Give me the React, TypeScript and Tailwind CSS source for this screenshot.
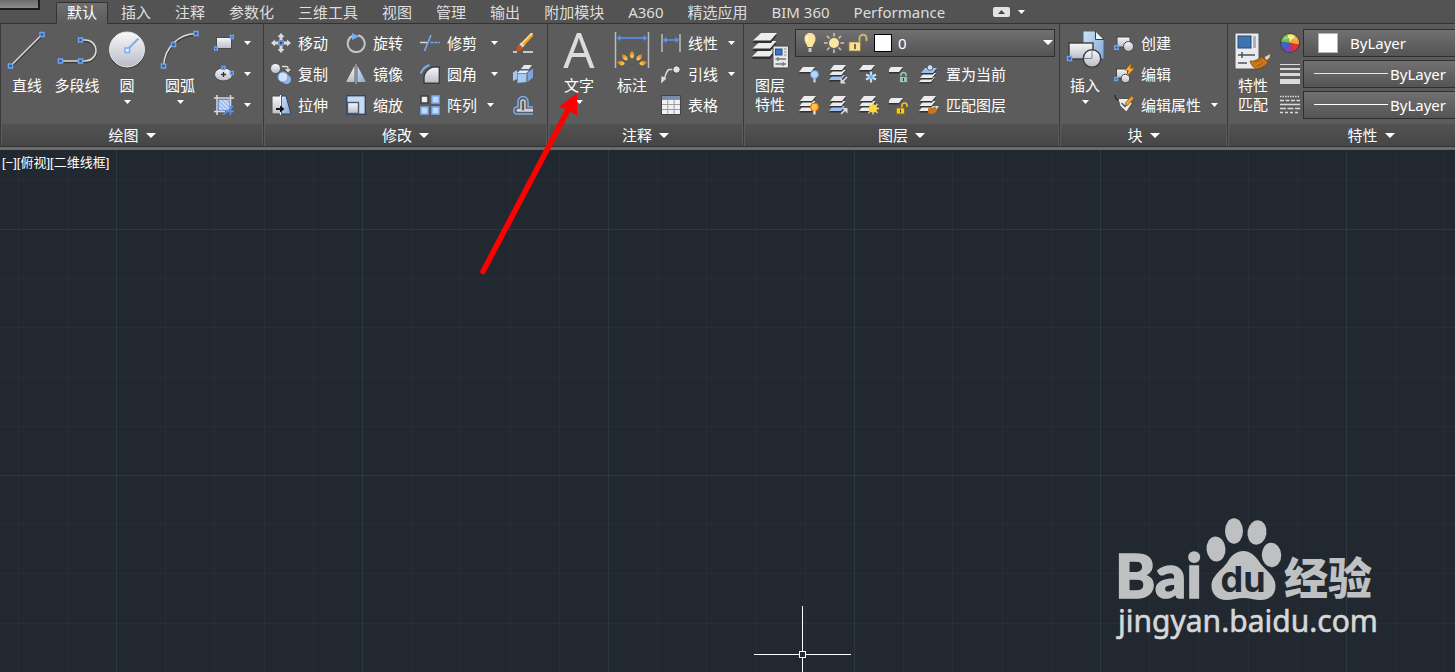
import type { ReactNode } from 'react'
import clsx from 'clsx'

const BLUE = '#7aacf5'
const LIGHT = '#d9dadc'

/* ---------- icon helpers ---------- */

function Small({ children }: { children: ReactNode }) {
  return (
    <svg width="20" height="20" viewBox="0 0 20 20" fill="none" className="shrink-0" aria-hidden="true">
      {children}
    </svg>
  )
}

function Large({ children }: { children: ReactNode }) {
  return (
    <svg width="38" height="38" viewBox="0 0 38 38" fill="none" className="shrink-0 overflow-visible" aria-hidden="true">
      {children}
    </svg>
  )
}

function Grip({ x, y, s = 4 }: { x: number; y: number; s?: number }) {
  return <rect x={x - s / 2} y={y - s / 2} width={s} height={s} fill="#39547e" stroke="#6fa3f0" strokeWidth="1.5" />
}

function Caret({ big = false }: { big?: boolean }) {
  return big ? (
    <svg width="10" height="5" viewBox="0 0 10 5" className="shrink-0" aria-hidden="true">
      <path d="M0 0h10L5 5z" fill="#fff" />
    </svg>
  ) : (
    <svg width="7" height="4" viewBox="0 0 7 4" className="shrink-0" aria-hidden="true">
      <path d="M0 0h7L3.5 4z" fill="#fff" />
    </svg>
  )
}

function Gradients() {
  return (
    <svg width="0" height="0" className="absolute" aria-hidden="true">
      <defs>
        <linearGradient id="silver" x1="0" y1="0" x2="0" y2="1">
          <stop offset="0" stopColor="#f8f8fa" />
          <stop offset="1" stopColor="#b9bcc8" />
        </linearGradient>
        <linearGradient id="ice" x1="0" y1="0" x2="1" y2="1">
          <stop offset="0" stopColor="#d3e4f6" />
          <stop offset="1" stopColor="#7fa6d6" />
        </linearGradient>
        <linearGradient id="flame" x1="0" y1="0" x2="0" y2="1">
          <stop offset="0" stopColor="#d8701a" />
          <stop offset="1" stopColor="#ffe04a" />
        </linearGradient>
        <pattern id="hatch" width="3" height="3" patternUnits="userSpaceOnUse" patternTransform="rotate(-45)">
          <rect width="3" height="3" fill="#8fb5ef" />
          <rect width="1.4" height="3" fill="#dbe8fc" />
        </pattern>
      </defs>
    </svg>
  )
}

/* ---------- draw ---------- */

const LineIcon = () => (
  <Large>
    <path d="M2.5 36 34 4.500" stroke="#3a3a3a" strokeWidth="2.500" />
    <path d="M2.5 35 34 3.500" stroke={LIGHT} strokeWidth="1.600" />
    <Grip x={2.5} y={35} />
    <Grip x={34} y={3.5} />
  </Large>
)

const PolylineIcon = () => (
  <Large>
    <path d="M2 31h25.500a10.500 10.500 0 0 0 0-21h-5" stroke="#3a3a3a" strokeWidth="2.500" />
    <path d="M2 30h25.500a10.500 10.500 0 0 0 0-21h-5" stroke={LIGHT} strokeWidth="1.600" />
    <Grip x={2.5} y={30} />
    <Grip x={22.5} y={30} />
    <Grip x={22.5} y={9} />
  </Large>
)

const CircleIcon = () => (
  <Large>
    <circle cx="19" cy="19.500" r="18" fill="#3b3b3b" />
    <circle cx="19" cy="18.500" r="17.500" fill="url(#silver)" stroke="#e6e7ea" />
    <path d="M19 19 30.500 7.500" stroke={BLUE} strokeWidth="2" />
    <rect x="17" y="17" width="4.500" height="4.500" fill="#e8effa" stroke={BLUE} strokeWidth="1.500" />
  </Large>
)

const ArcIcon = () => (
  <Large>
    <path d="M2.500 36C3.500 17 18 4 35 3.500" stroke="#3a3a3a" strokeWidth="2.500" />
    <path d="M2.500 35C3.500 16 18 3 35 2.500" stroke={LIGHT} strokeWidth="1.600" />
    <Grip x={2.5} y={35} />
    <Grip x={12.5} y={13.5} />
    <Grip x={35} y={2.5} />
  </Large>
)

const RectIcon = () => (
  <Small>
    <rect x="2.500" y="4.500" width="15" height="11" fill="url(#silver)" stroke="#4a4a4a" />
    <Grip x={1.8} y={15.5} s={3} />
    <Grip x={18} y={4} s={3} />
  </Small>
)

const EllipseIcon = () => (
  <Small>
    <ellipse cx="9.500" cy="10.500" rx="9" ry="6.500" fill="url(#silver)" stroke="#4a4a4a" />
    <path d="M9.500 8v5M7 10.500h5" stroke="#333" strokeWidth="1.300" />
    <Grip x={9.5} y={4} s={3} />
    <Grip x={17.8} y={9} s={3} />
  </Small>
)

const HatchIcon = () => (
  <Small>
    <rect x="4" y="4" width="12" height="12" fill="url(#hatch)" stroke="#2f4a7d" />
    <path d="M3 0v20M16.500 0v14M0 3h20M0 16.500h11" stroke={LIGHT} strokeWidth="1.500" />
    <path d="M16.500 11v9M12 16.500h8M9 20l10-9" stroke="#5b93ee" strokeWidth="1.500" />
  </Small>
)

/* ---------- modify ---------- */

const MoveIcon = () => (
  <Small>
    <path
      d="M10 0l3.500 4h-2v3h-3V4h-2zM10 20l3.500-4h-2v-3h-3v3h-2zM0 10l4-3.500v2h3v3H4v2zM20 10l-4-3.500v2h-3v3h3v2z"
      fill={LIGHT}
    />
    <rect x="8" y="8" width="4" height="4" fill="#2f4a7d" stroke={BLUE} strokeWidth="1.300" />
  </Small>
)

const CopyIcon = () => (
  <Small>
    <circle cx="15.500" cy="15.500" r="4.500" fill="#8fb4ea" />
    <circle cx="4.500" cy="4.500" r="4.500" fill="url(#silver)" />
    <circle cx="12" cy="13" r="5" fill="#cfe0f7" stroke="#6f9fe4" />
    <path d="M11 2.500h4.500a1.500 1.500 0 0 1 1.500 1.500v1" stroke={LIGHT} strokeWidth="1.300" />
    <path d="M14 5h6l-3 3.500z" fill={LIGHT} />
  </Small>
)

const StretchIcon = () => (
  <Small>
    <path d="M10 1h5l5 18H10z" fill="url(#ice)" stroke="#31435f" />
    <rect x="1" y="1" width="9.500" height="18" fill="url(#silver)" stroke="#4b4b4b" />
    <path d="M9.500 0v20" stroke="#fff" strokeWidth="1.200" />
    <path d="M5 14h5" stroke="#111" strokeWidth="2" />
    <path d="M9 10.500 13.500 14 9 17.500z" fill="#111" />
  </Small>
)

const RotateIcon = () => (
  <Small>
    <path d="M12 2.300a8.500 8.500 0 1 1-6 .900" stroke="#c4c5c8" strokeWidth="2" />
    <path d="M6 0l7 3.500L6 7z" fill={BLUE} />
  </Small>
)

const MirrorIcon = () => (
  <Small>
    <path d="M8.500 2v16H0z" fill="url(#silver)" />
    <path d="M11.500 2v16H20z" fill="url(#ice)" />
    <path d="M10 0v20" stroke="#aeb0b5" strokeWidth="1.200" />
  </Small>
)

const ScaleIcon = () => (
  <Small>
    <rect x=".700" y=".700" width="18.600" height="18.600" fill="#c3daf3" stroke="#31435f" strokeWidth="1.400" />
    <rect x="1.500" y="7.500" width="11" height="11" fill="url(#silver)" stroke="#51596a" strokeWidth="1.400" />
  </Small>
)

const TrimIcon = () => (
  <Small>
    <path d="M0 9.500h7" stroke={LIGHT} strokeWidth="1.500" />
    <path d="M4.500 18 11 2" stroke={BLUE} strokeWidth="1.600" />
    <path d="M10.500 9.500H20" stroke={BLUE} strokeWidth="1.500" strokeDasharray="3 1" />
  </Small>
)

const FilletIcon = () => (
  <Small>
    <path d="M4 19.300V13C4 8.500 8.500 4 13 3h6.300v16.300z" fill="url(#silver)" stroke="#3c3c3c" strokeWidth="1.400" />
    <path d="M.500 9.500C2.500 5 5 2.500 9.500 1" stroke={BLUE} strokeWidth="2" />
  </Small>
)

const ArrayIcon = () => (
  <Small>
    <rect x="1" y="1" width="7" height="7" fill="#eee" stroke="#3f3f3f" strokeWidth="1.500" />
    <rect x="12" y="1" width="7" height="7" fill="#c3d9f8" stroke={BLUE} strokeWidth="1.500" />
    <rect x="1" y="12" width="7" height="7" fill="#c3d9f8" stroke={BLUE} strokeWidth="1.500" />
    <rect x="12" y="12" width="7" height="7" fill="#c3d9f8" stroke={BLUE} strokeWidth="1.500" />
  </Small>
)

const EraseIcon = () => (
  <Small>
    <path d="M0 19h4M10 19h10" stroke="#eee" strokeWidth="1.300" />
    <path d="M18 0h2v3l-9 10-3-3z" fill="#e8a52c" />
    <path d="M19 0 9 10.500" stroke="#ffe69a" strokeWidth="1.300" />
    <path d="m8 9.500 3.500 3.200-2 1.800-3.300-3z" fill="#ddd" />
    <path d="m6.500 11.500 3.200 3C9 17.500 6 18.500 3 18c1-1.500.500-5.500 3.500-6.500z" fill="#cf5413" />
  </Small>
)

const ExplodeIcon = () => (
  <Small>
    <path d="m8 5 3-4h8l-3 4z" fill="#dbe9f9" />
    <path d="M0 8.500 4 6v9l-4 2z" fill="#a3c6ee" />
    <path d="m4 9 3-2.500h9L13.500 9z" fill="#e4eefa" />
    <path d="M4.500 9.500h9V18L4.500 19z" fill="#a9c9f0" stroke="#6c8db8" strokeWidth=".600" />
    <path d="m14.500 9 5.500-4.500v9L14.500 18z" fill="#7ba7de" />
  </Small>
)

const OffsetIcon = () => (
  <Small>
    <path d="M20 19H3.500A2.500 2.500 0 0 1 1 16.500v-2A2.500 2.500 0 0 1 3.500 12H5V6.500a5 5 0 0 1 10 0V12h5" stroke={BLUE} strokeWidth="1.500" />
    <path d="M20 16H5c-1 0-1-1.500 0-1.500h3V7a2 2 0 0 1 4 0v7.500h8" stroke="#d2d3d6" strokeWidth="1.500" />
  </Small>
)

/* ---------- annotate ---------- */

const TextIcon = () => (
  <Large>
    <text x="19" y="36.500" textAnchor="middle" fontSize="49" fill="#dcdcdc" fontFamily="Noto Sans, sans-serif">
      A
    </text>
  </Large>
)

const DimensionIcon = () => (
  <Large>
    <path d="M2.500 1v36M35.500 1v36" stroke="#bdbdbf" strokeWidth="1.500" />
    <path d="M6 7h26" stroke="#5594f2" strokeWidth="1.600" />
    <path d="M3.500 7l4-3v6zM34.500 7l-4-3v6z" fill="#5594f2" />
    {[-75, -40, 0, 40, 75].map((a) => (
      <path key={a} d="M19 19.500c2.800 3.500 3 6 0 8-3-2-2.800-4.500 0-8z" fill="url(#flame)" transform={`rotate(${a} 19 35)`} />
    ))}
  </Large>
)

const LinearIcon = () => (
  <Small>
    <path d="M1 1v18M19 1v18" stroke="#c4c4c6" strokeWidth="1.400" />
    <path d="M3 7h14" stroke="#5594f2" strokeWidth="1.500" />
    <path d="M1.700 7l4-3v6zM18.300 7l-4-3v6z" fill="#5594f2" />
  </Small>
)

const LeaderIcon = () => (
  <Small>
    <path d="M3 15C5 11 5 7 8 5.500h4" stroke={LIGHT} strokeWidth="1.400" />
    <path d="M0 19.500 .500 12l5 2.500z" fill={LIGHT} />
    <circle cx="15.500" cy="5.500" r="3.800" fill="#dfe3ee" stroke="#3d3d3d" />
  </Small>
)

const TableIcon = () => (
  <Small>
    <rect x=".500" y=".500" width="19" height="19" fill="#9b9da3" stroke="#444" />
    <rect x="1" y="1" width="18" height="3.500" fill="#788ba9" />
    {[5, 10, 15].map((y) => [1, 7.3, 13.6].map((x) => <rect key={`${x}-${y}`} x={x} y={y} width="5.300" height="4" fill="#f1f2f5" />))}
  </Small>
)

/* ---------- layers ---------- */

function Sheet({ x, y, blue = false }: { x: number; y: number; blue?: boolean }) {
  return (
    <g transform={`translate(${x} ${y})`}>
      <path d="M0 6.500 4 1.500h12L12 6.500z" fill="#303030" />
      <path d="M0 5 4 0h12l-4 5z" fill={blue ? '#9cc0ee' : '#ececee'} />
    </g>
  )
}

function Stack({ blue = false }: { blue?: boolean }) {
  return (
    <>
      <Sheet x={0} y={11} blue={blue} />
      <Sheet x={0.5} y={6} />
      <Sheet x={1} y={1} />
    </>
  )
}

const LayerPropsIcon = () => (
  <Large>
    {[18, 10, 2].map((y, i) => (
      <g key={y} transform={`translate(${1 + i * 0.5} ${y})`}>
        <path d="M0 9 8 2h16l-6 8H1z" fill="#303030" />
        <path d="M0 7.500 8 0h16l-6.500 7.500z" fill="#ededef" />
      </g>
    ))}
    <rect x="22" y="15" width="15.500" height="22" rx="1" fill="#e4e6ea" stroke="#444" />
    <rect x="24.500" y="18" width="6.500" height="6" fill="#3b74c2" stroke="#274d85" />
    <path d="M33 18h2.500M33 21h2.500M33 24h2.500" stroke="#888" />
    <path d="M24.500 28h10.500M24.500 33h10.500" stroke="#777" strokeWidth="1.300" />
    <path d="M27 26v4M32 31v4" stroke="#777" strokeWidth="1.300" />
  </Large>
)

const LayerOffIcon = () => (
  <Small>
    <Sheet x={0} y={3} />
    <circle cx="15.500" cy="10.500" r="4" fill="#b5d8f8" stroke="#5d98d8" />
    <path d="M15.500 14.500v4" stroke="#ddd" strokeWidth="2" />
  </Small>
)

const LayerIsolateIcon = () => (
  <Small>
    <Stack blue />
    <path d="m18 13-4 4" stroke="#ddd" strokeWidth="1.600" />
    <path d="M11.500 14v5.500H17z" fill="#ddd" />
  </Small>
)

const LayerFreezeIcon = () => (
  <Small>
    <Sheet x={0} y={1} />
    <path d="M12 7.500v11M7 10.500l10 5M17 10.500l-10 5" stroke="#c4e0fb" strokeWidth="2.200" />
    <circle cx="12" cy="13" r="2" fill="#6faee8" />
  </Small>
)

const LayerLockIcon = () => (
  <Small>
    <Sheet x={-2} y={3} />
    <path d="M12 13v-2a2.500 2.500 0 0 1 5 0v2" stroke="#a9c2c0" strokeWidth="1.500" />
    <rect x="10.500" y="12.500" width="8" height="6" fill="#9fc0bb" stroke="#52706d" />
    <path d="M14.500 14v3" stroke="#333" />
  </Small>
)

const MakeCurrentIcon = () => (
  <Small>
    <Sheet x={0} y={13} />
    <Sheet x={1} y={9} />
    <Sheet x={2} y={4} blue />
    <circle cx="11" cy="3.500" r="2.800" fill="#dcdfe6" stroke="#4a5b78" />
  </Small>
)

const LayersOnIcon = () => (
  <Small>
    <Stack />
    <circle cx="15.500" cy="12" r="3.800" fill="#ffc63a" stroke="#e8731a" strokeWidth="1.300" />
    <path d="M15.500 15.500v4" stroke="#eee" strokeWidth="2" />
  </Small>
)

const LayerUnisolateIcon = () => (
  <Small>
    <Stack blue />
    <path d="m12 19 4-4" stroke="#ddd" strokeWidth="1.600" />
    <path d="M18.500 18.500V13H13z" fill="#ddd" />
  </Small>
)

const LayersThawIcon = () => (
  <Small>
    <Stack />
    <path d="M14 7.500v12M8 13.500h12M9.500 9l9 9M18.500 9l-9 9" stroke="#f0dc9a" strokeWidth="1.300" />
    <circle cx="14" cy="13.500" r="4" fill="#ffd83a" />
  </Small>
)

const LayerUnlockIcon = () => (
  <Small>
    <Sheet x={-2} y={3} />
    <path d="M13 14v-3.500a2.500 2.500 0 0 1 5 0V12" stroke="#f0bf2a" strokeWidth="1.600" />
    <rect x="7.500" y="13" width="8" height="6" fill="#f7c92c" stroke="#8f6d12" />
    <path d="M11.500 14.500v3" stroke="#333" />
  </Small>
)

const MatchLayerIcon = () => (
  <Small>
    <Stack />
    <path d="m16 11 4 0-3 4z" fill="#ddd" />
    <path d="M9 13c2 1 5-1 7-1l2 3c-1 4-6 5-9 3z" fill="#c8741c" />
  </Small>
)

const BulbIcon = () => (
  <Small>
    <path d="M10 0c-3.500 0-5.500 2.500-5.500 5.500 0 4 2.500 5.500 3 8.500h5c.500-3 3-4.500 3-8.500C15.500 2.500 13.500 0 10 0z" fill="#fbe6a0" />
    <path d="M8.500 15h3v4h-3z" fill="#c8c9cc" />
    <path d="M8.500 3c-1.500 1-1.500 3-1 5" stroke="#fff" />
  </Small>
)

const SunIcon = () => (
  <Small>
    <path d="M10 0v20M0 10h20M3 3l14 14M17 3 3 17" stroke="#cfc9b4" strokeWidth="1.500" />
    <circle cx="10" cy="10" r="6.500" fill="#666" />
    <circle cx="10" cy="10" r="5" fill="#fbe6a0" />
  </Small>
)

const PadlockIcon = () => (
  <Small>
    <path d="M11.500 9V5.500A3.500 3.500 0 0 1 18.500 5v3" stroke="#c9b77c" strokeWidth="2" />
    <rect x="1" y="9" width="11.500" height="9" fill="#fbdf90" stroke="#8d7a42" strokeWidth=".800" />
    <path d="M7 11v5" stroke="#444" strokeWidth="1.500" />
  </Small>
)

/* ---------- block ---------- */

const InsertIcon = () => (
  <Large>
    <path d="M17 0h13l8 8v20H17z" fill="url(#ice)" stroke="#44607f" />
    <path d="M29.500 0v8.500H38z" fill="#eef4fb" stroke="#3e3e3e" />
    <rect x="3" y="12" width="24" height="16" fill="url(#silver)" stroke="#3e3e3e" strokeWidth="1.400" />
    <circle cx="26" cy="27.500" r="8.700" fill="url(#silver)" stroke="#3e3e3e" strokeWidth="1.400" />
    <path d="M26 19.500v8h-8" stroke="#808490" />
    <Grip x={3.5} y={27.5} />
  </Large>
)

const CreateBlockIcon = () => (
  <Small>
    <rect x="3" y="4" width="13" height="10" fill="url(#silver)" stroke="#454545" />
    <circle cx="14.500" cy="13.500" r="5" fill="url(#silver)" stroke="#454545" />
    <Grip x={2.5} y={14.5} s={3.5} />
  </Small>
)

const EditBlockIcon = () => (
  <Small>
    <rect x="2.500" y="5" width="11" height="9" fill="url(#silver)" stroke="#454545" />
    <circle cx="11.500" cy="14.500" r="4.300" fill="url(#silver)" stroke="#454545" />
    <Grip x={2} y={15} s={3} />
    <path d="M17 0 11 6.500h3.500L13 12l7-7.500h-4z" fill="#f9b42a" stroke="#c67408" strokeWidth=".600" />
  </Small>
)

const EditAttrIcon = () => (
  <Small>
    <path d="M1 0c0 3 1 5 4 5" stroke="#2a2a2a" strokeWidth="1.300" />
    <path d="M4 3.500h10l4 5L12.500 17 6 11z" fill="#ececef" stroke="#3c3c3c" strokeWidth=".800" />
    <path d="m7.500 8 3.500 3.500 3-3" stroke="#555" strokeWidth="1.500" />
    <path d="m17.500 1 2.500 2-6 7-3 .700.500-3z" fill="#f0a030" stroke="#8c4b10" strokeWidth=".700" />
  </Small>
)

/* ---------- properties ---------- */

const MatchPropsIcon = () => (
  <Large>
    <rect x="1" y="2" width="24" height="36" fill="#e9ebee" stroke="#555" />
    <rect x="4" y="5" width="13" height="12" fill="#3f74ae" stroke="#254a75" />
    <path d="M19 5h3v12h-3z" fill="#aeb1b6" />
    <path d="M4 24h17M8 21v6M4 32h9" stroke="#505256" strokeWidth="1.500" />
    <path d="m30 26 7-4-1 5-4 3z" fill="#d8d2c6" stroke="#6b5434" />
    <path d="M16 30c5 1 9-3 12-4l6 5c-2 4-8 7-12 7-2-1-5-4-6-8z" fill="#c9781a" stroke="#7d4509" strokeWidth=".800" />
    <path d="M21 31c2 0 5-2 7-3M23 35c2 0 4-2 6-4" stroke="#9a560e" />
  </Large>
)

const WEDGES = ['#f3e36b', '#f5a13c', '#e2352a', '#8a3fb4', '#3a63d6', '#74c043']

const ColorWheelIcon = () => (
  <Small>
    <circle cx="10" cy="10" r="10" fill="#3f3f3f" />
    {WEDGES.map((c, i) => (
      <path key={c} d="M10 10V1a9 9 0 0 1 7.800 4.500z" fill={c} transform={`rotate(${i * 60 - 20} 10 10)`} />
    ))}
    <path d="M3 7a8 8 0 0 1 14 0c-4-2-10-2-14 0z" fill="#fff" opacity=".35" />
  </Small>
)

const LineweightIcon = () => (
  <Small>
    <path d="M0 0h20v1H0zM0 4h20v2H0zM0 9h20v3H0zM0 15h20v5H0z" fill="#d9dadc" />
  </Small>
)

const LinetypeIcon = () => (
  <Small>
    <path d="M0 1.500h20" stroke={LIGHT} strokeWidth="1.500" strokeDasharray="1.500 1" />
    <path d="M0 5.500h20" stroke={LIGHT} strokeWidth="1.500" strokeDasharray="4 1.500" />
    <path d="M0 9.500h20" stroke={LIGHT} strokeWidth="1.500" />
    <path d="M0 13.500h20" stroke={LIGHT} strokeWidth="1.500" strokeDasharray="6 1.500" />
    <path d="M0 17.500h20" stroke={LIGHT} strokeWidth="1.500" strokeDasharray="3 2" />
  </Small>
)

/* ---------- ribbon parts ---------- */

function Panel({ title, className, children }: { title: string; className: string; children: ReactNode }) {
  return (
    <section className={clsx('flex shrink-0 flex-col border-l border-[#3a3a3a] px-px', className)} aria-label={title}>
      <div className="flex h-[100px] pt-[3px]">{children}</div>
      <button type="button" className="flex h-[22px] items-center justify-center gap-[7px] bg-linear-to-b from-[#525252] to-[#464646]">
        {title}
        <Caret big />
      </button>
    </section>
  )
}

function BigButton({ icon, lines, className, menu = false }: { icon: ReactNode; lines: string[]; className: string; menu?: boolean }) {
  return (
    <button type="button" className={clsx('flex shrink-0 flex-col items-center pt-1 leading-[19px]', className)}>
      {icon}
      <span className="mt-[7px] flex flex-col whitespace-nowrap">
        {lines.map((line) => (
          <span key={line}>{line}</span>
        ))}
      </span>
      {menu && (
        <span className="mt-[5px]">
          <Caret />
        </span>
      )}
    </button>
  )
}

function Tool({ icon, label, name, menu = false, wide = false }: { icon: ReactNode; label?: string; name?: string; menu?: boolean; wide?: boolean }) {
  return (
    <div className={clsx('flex h-[31px] items-center', wide ? 'gap-3.5' : 'gap-2.5')}>
      <button type="button" aria-label={name} className="flex items-center gap-[7px] whitespace-nowrap">
        {icon}
        {label}
      </button>
      {menu && (
        <button type="button" aria-label={`${label ?? name} ▾`}>
          <Caret />
        </button>
      )}
    </div>
  )
}

function Combo({ children }: { children: ReactNode }) {
  return (
    <div className="flex h-7 flex-1 items-center border border-[#2e2e2e] bg-linear-to-b from-[#717171] to-[#545454]">
      {children}
    </div>
  )
}

function ByLayer({ icon, label, children }: { icon: ReactNode; label: string; children: ReactNode }) {
  return (
    <div className="flex h-[31px] items-center gap-[3px]">
      {icon}
      <Combo>
        {children}
        <select aria-label={label} className="flex-1 appearance-none bg-transparent outline-none">
          <option>ByLayer</option>
        </select>
      </Combo>
    </div>
  )
}

const TABS = ['默认', '插入', '注释', '参数化', '三维工具', '视图', '管理', '输出', '附加模块', 'A360', '精选应用', 'BIM 360', 'Performance']

function TabBar() {
  return (
    <nav className="flex h-6 border-b border-[#333] bg-[#535353]">
      <div className="mr-[15px] h-2.5 w-10 shrink-0 border-r-2 border-b-2 border-[#1c1c1c] bg-linear-to-b from-[#6c6c6c] to-[#8a8a8a]" />
      {TABS.map((tab, i) => (
        <button
          key={tab}
          type="button"
          className={clsx(
            'mx-px mt-0.5 -mb-px flex shrink-0 items-center rounded-t-xs border px-2.5 pb-0.5 leading-[18px] whitespace-nowrap',
            i === 0
              ? 'border-[#333] border-b-[#5c5c5c] bg-linear-to-b from-[#6e6e6e] to-[#5c5c5c] text-white'
              : 'border-transparent text-[#dedede]',
          )}
        >
          {tab}
        </button>
      ))}
      <button type="button" aria-label="最小化" className="ml-9 flex items-center gap-2">
        <svg width="17" height="10" viewBox="0 0 17 10" aria-hidden="true">
          <rect width="17" height="10" rx="2" fill="#e2e2e4" />
          <path d="M5 7h7L8.500 3z" fill="#444" />
        </svg>
        <Caret />
      </button>
    </nav>
  )
}

function Ribbon() {
  return (
    <div className="flex overflow-hidden bg-[#5c5c5c]">
      <Panel title="绘图" className="w-[263px]">
        <div className="flex pl-0.5">
          <BigButton icon={<LineIcon />} lines={['直线']} className="w-[46px]" />
          <BigButton icon={<PolylineIcon />} lines={['多段线']} className="w-[54px]" />
          <BigButton icon={<CircleIcon />} lines={['圆']} className="w-[46px]" menu />
          <BigButton icon={<ArcIcon />} lines={['圆弧']} className="w-[60px]" menu />
        </div>
        <div className="pl-1">
          <Tool icon={<RectIcon />} name="矩形" menu />
          <Tool icon={<EllipseIcon />} name="椭圆" menu />
          <Tool icon={<HatchIcon />} name="图案填充" menu />
        </div>
      </Panel>

      <Panel title="修改" className="w-[284px]">
        <div className="ml-1.5 w-[75px]">
          <Tool icon={<MoveIcon />} label="移动" />
          <Tool icon={<CopyIcon />} label="复制" />
          <Tool icon={<StretchIcon />} label="拉伸" />
        </div>
        <div className="w-[74px]">
          <Tool icon={<RotateIcon />} label="旋转" />
          <Tool icon={<MirrorIcon />} label="镜像" />
          <Tool icon={<ScaleIcon />} label="缩放" />
        </div>
        <div className="w-[93px]">
          <Tool icon={<TrimIcon />} label="修剪" menu wide />
          <Tool icon={<FilletIcon />} label="圆角" menu wide />
          <Tool icon={<ArrayIcon />} label="阵列" menu />
        </div>
        <div>
          <Tool icon={<EraseIcon />} name="删除" />
          <Tool icon={<ExplodeIcon />} name="分解" />
          <Tool icon={<OffsetIcon />} name="偏移" />
        </div>
      </Panel>

      <Panel title="注释" className="w-[196px]">
        <div className="flex pl-1">
          <BigButton icon={<TextIcon />} lines={['文字']} className="w-[52px]" menu />
          <BigButton icon={<DimensionIcon />} lines={['标注']} className="w-[54px]" />
        </div>
        <div className="pl-0.5">
          <Tool icon={<LinearIcon />} label="线性" menu />
          <Tool icon={<LeaderIcon />} label="引线" menu />
          <Tool icon={<TableIcon />} label="表格" />
        </div>
      </Panel>

      <Panel title="图层" className="w-[316px]">
        <BigButton icon={<LayerPropsIcon />} lines={['图层', '特性']} className="w-[50px]" />
        <div className="flex-1 pr-[3px]">
          <div className="flex h-[31px] items-center">
            <Combo>
              <div className="flex gap-1 pl-1">
                <BulbIcon />
                <SunIcon />
                <PadlockIcon />
              </div>
              <span className="ml-1.5 size-[18px] border border-black bg-white" />
              <select aria-label="图层" className="ml-1.5 flex-1 appearance-none bg-transparent outline-none">
                <option>0</option>
              </select>
              <span className="pr-px">
                <Caret big />
              </span>
            </Combo>
          </div>
          <div className="flex gap-2.5 pl-1">
            <Tool icon={<LayerOffIcon />} name="关" />
            <Tool icon={<LayerIsolateIcon />} name="隔离" />
            <Tool icon={<LayerFreezeIcon />} name="冻结" />
            <Tool icon={<LayerLockIcon />} name="锁定" />
            <Tool icon={<MakeCurrentIcon />} label="置为当前" />
          </div>
          <div className="flex gap-2.5 pl-1">
            <Tool icon={<LayersOnIcon />} name="打开所有图层" />
            <Tool icon={<LayerUnisolateIcon />} name="取消隔离" />
            <Tool icon={<LayersThawIcon />} name="解冻所有图层" />
            <Tool icon={<LayerUnlockIcon />} name="解锁" />
            <Tool icon={<MatchLayerIcon />} label="匹配图层" />
          </div>
        </div>
      </Panel>

      <Panel title="块" className="w-[168px]">
        <BigButton icon={<InsertIcon />} lines={['插入']} className="w-12" menu />
        <div className="pl-[5px]">
          <Tool icon={<CreateBlockIcon />} label="创建" />
          <Tool icon={<EditBlockIcon />} label="编辑" />
          <Tool icon={<EditAttrIcon />} label="编辑属性" menu />
        </div>
      </Panel>

      <Panel title="特性" className="w-[287px] grow">
        <BigButton icon={<MatchPropsIcon />} lines={['特性', '匹配']} className="w-12" />
        <div className="flex-1 pl-[3px]">
          <ByLayer icon={<ColorWheelIcon />} label="对象颜色">
            <span className="mr-3 ml-3.5 size-5 border border-[#b5b5b5] bg-white" />
          </ByLayer>
          <ByLayer icon={<LineweightIcon />} label="线宽">
            <span className="mr-0.5 ml-2.5 h-px w-[74px] bg-[#e6e6e6]" />
          </ByLayer>
          <ByLayer icon={<LinetypeIcon />} label="线型">
            <span className="mr-0.5 ml-2.5 h-px w-[74px] bg-white" />
          </ByLayer>
        </div>
      </Panel>
    </div>
  )
}

/* ---------- drawing area ---------- */

function Grid() {
  return (
    <svg className="absolute inset-0 size-full" aria-hidden="true">
      <defs>
        <pattern id="grid" x="116" y="79" width="246" height="246" patternUnits="userSpaceOnUse">
          {[49, 98, 148, 197].map((n) => (
            <path key={n} d={`M${n}.5 0v246M0 ${n}.5h246`} stroke="#272e38" />
          ))}
          <path d="M.5 0v246M0 .5h246" stroke="#2f3745" />
        </pattern>
      </defs>
      <rect width="100%" height="100%" fill="url(#grid)" />
    </svg>
  )
}

function Crosshair() {
  return (
    <svg className="absolute top-[456px] left-[754px]" width="97" height="97" viewBox="0 0 97 97" fill="none" stroke="#fff" aria-hidden="true">
      <path d="M48.500 0v45M48.500 52v45M0 48.500h45M52 48.500h45" />
      <rect x="45.500" y="45.500" width="6" height="6" />
    </svg>
  )
}

function Pointer() {
  return (
    <svg className="pointer-events-none absolute top-[90px] left-[475px]" width="110" height="190" viewBox="0 0 110 190" aria-hidden="true">
      <path d="M8 181.500 94 18" stroke="#f00" strokeWidth="5.500" strokeLinecap="round" />
      <path d="M102 3v22.500L93 20l-9-3z" fill="#f00" />
    </svg>
  )
}

function Watermark() {
  return (
    <svg className="absolute right-[75px] bottom-[26px]" width="265" height="130" viewBox="0 0 265 130" fill="#bfc0c2" aria-label="Baidu 经验">
      <text x="0" y="82" fontSize="61" fontWeight="900" fontFamily="Lato, sans-serif" stroke="#bfc0c2" strokeWidth="1.500">
        Bai
      </text>
      <ellipse cx="101" cy="33" rx="9.500" ry="12.500" transform="rotate(-5 101 33)" />
      <ellipse cx="119" cy="15" rx="9" ry="12.700" />
      <ellipse cx="142" cy="16.500" rx="9.500" ry="12.200" transform="rotate(10 142 16.500)" />
      <ellipse cx="156.500" cy="39" rx="9.700" ry="12.200" transform="rotate(-3 156.500 39)" />
      <path d="M128.500 35c7 0 12 5 16 11 4 7 16 13 16 24 0 9-6 14-15 14-6 0-11-2-17-2s-11 2-17 2c-9 0-15-6-15-14 0-11 12-17 16-24s9-11 16-11z" />
      <text x="128" y="76" textAnchor="middle" fontSize="36" fontWeight="700" fontFamily="Inter, sans-serif" fill="#212830">
        du
      </text>
      <text x="169" y="79" fontSize="44" fontWeight="900" fontFamily="Noto Sans CJK SC, sans-serif">
        经验
      </text>
      <text x="3" y="116" fontSize="30" fontFamily="Noto Sans, sans-serif" fill="#d6d7d8" stroke="#d6d7d8" strokeWidth=".600">
        jingyan.baidu.com
      </text>
    </svg>
  )
}

export default function App() {
  return (
    <div className="relative flex min-h-screen flex-col overflow-hidden bg-[#212830] font-['Noto_Sans','Noto_Sans_CJK_SC',sans-serif] text-[15px] leading-5 text-white">
      <Gradients />
      <header>
        <TabBar />
        <Ribbon />
        <div className="h-1 border-t border-[#333] bg-[#6b6b6b]" />
      </header>
      <main className="relative flex-1">
        <Grid />
        <div className="relative pt-1 pl-0.5 font-['Liberation_Sans','Noto_Sans_CJK_SC',sans-serif] text-[13px] leading-[18px]">[−][俯视][二维线框]</div>
        <Crosshair />
        <Watermark />
      </main>
      <Pointer />
    </div>
  )
}
